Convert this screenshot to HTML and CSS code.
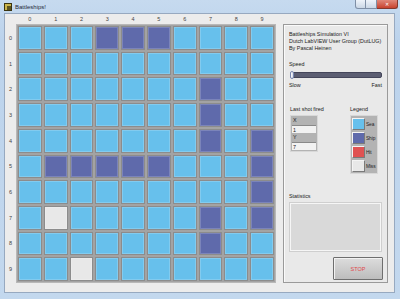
FILE: index.html
```html
<!DOCTYPE html>
<html lang="en">
<head>
    <meta charset="UTF-8">
    <title>Battleships!</title>
    <link rel="stylesheet" href="styles.css">
</head>
<body>

    <div class="window">
        <div class="titlebar">
            <span class="app-icon"></span>
            <span class="title">Battleships!</span>
            <div class="controls">
                <span class="ctl min"></span>
                <span class="ctl max"></span>
                <span class="ctl close">&#x2715;</span>
            </div>
        </div>

        <div class="content">
            <div class="board">
                <div class="corner"></div>
                <div class="col-labels" id="cols"></div>
                <div class="row-labels" id="rows"></div>
                <div class="grid" id="grid"></div>
            </div>

            <div class="panel">
                <div class="info">
                    Battleships Simulation VI<br>
                    Dutch LabVIEW User Group (DutLUG)<br>
                    By Pascal Heinen
                </div>

                <div class="label speed-label">Speed</div>
                <div class="slider"><span class="thumb"></span></div>
                <div class="slider-scale"><span>Slow</span><span>Fast</span></div>

                <div class="shots">
                    <div class="shot-block">
                        <div class="label">Last shot fired</div>
                        <div class="shot-box">
                            <div class="shot-head">X</div>
                            <div class="shot-val">1</div>
                            <div class="shot-head">Y</div>
                            <div class="shot-val">7</div>
                        </div>
                    </div>
                    <div class="legend-block">
                        <div class="label">Legend</div>
                        <div class="legend-box">
                            <div class="legend-row"><span class="swatch sea"></span>Sea</div>
                            <div class="legend-row"><span class="swatch ship"></span>Ship</div>
                            <div class="legend-row"><span class="swatch hit"></span>Hit</div>
                            <div class="legend-row"><span class="swatch miss"></span>Miss</div>
                        </div>
                    </div>
                </div>

                <div class="label stats-label">Statistics</div>
                <div class="stats"></div>

                <div class="stop-row">
                    <button class="stop">STOP</button>
                </div>
            </div>
        </div>
    </div>

    <script>
        // board state: s = sea, b = ship, m = miss
        const board = [
            "sssbbbssss",
            "ssssssssss",
            "sssssssbss",
            "sssssssbss",
            "sssssssbsb",
            "sbbbbbsssb",
            "sssssssssb",
            "smsssssbsb",
            "sssssssbss",
            "ssmsssssss"
        ];
        const names = { s: "sea", b: "ship", m: "miss", h: "hit" };

        const cols = document.getElementById("cols");
        const rows = document.getElementById("rows");
        const grid = document.getElementById("grid");

        for (let i = 0; i < 10; i++) {
            cols.innerHTML += `<span>${i}</span>`;
            rows.innerHTML += `<span>${i}</span>`;
        }

        board.forEach(line => {
            for (const ch of line) {
                grid.innerHTML += `<div class="cell ${names[ch]}"></div>`;
            }
        });
    </script>

</body>
</html>
```

FILE: styles.css
```css
* {
    box-sizing: border-box;
}
body {
    margin: 0;
    font-family: "Liberation Sans", Arial, sans-serif;
    color: #222;
}
.window {
    width: 400px;
    height: 299px;
    background: linear-gradient(#c6daef, #bcd3ec 40px, #c3d8ee);
    padding: 0 5px 6px 4px;
    display: flex;
    flex-direction: column;
}
.titlebar {
    height: 13px;
    display: flex;
    align-items: center;
    position: relative;
}
.app-icon {
    width: 8px;
    height: 8px;
    background: #5b5320;
    border: 1px solid #3a3410;
    box-shadow: inset 2px 2px 0 #c9b44a;
}
.title {
    font-size: 6px;
    margin-left: 3px;
    color: #1e2a3a;
}
.controls {
    position: absolute;
    top: 0;
    right: -3px;
    display: flex;
}
.ctl {
    height: 9px;
    width: 11px;
    border: 1px solid #7f8fa6;
    border-top: none;
    background: linear-gradient(#eef3fa, #cbd7e6);
}
.min {
    border-radius: 0 0 0 3px;
}
.max {
    border-left: none;
}
.close {
    width: 21px;
    border-left: none;
    border-color: #83392e;
    border-radius: 0 0 3px 0;
    background: linear-gradient(#e0887a, #c8432f);
    color: #fff;
    font-size: 5px;
    line-height: 8px;
    text-align: center;
}
.content {
    flex: 1;
    background: #ececec;
    border: 1px solid #97a9c0;
    display: flex;
    align-items: flex-start;
}

/* board */
.board {
    display: grid;
    grid-template-columns: 11px 260px;
    grid-template-rows: 10px 259px;
}
.col-labels {
    display: grid;
    grid-template-columns: repeat(10, 1fr);
    gap: 2px;
    padding: 0 2px;
    font-size: 5.5px;
    color: #444;
    align-items: center;
    text-align: center;
}
.row-labels {
    display: grid;
    grid-template-rows: repeat(10, 1fr);
    gap: 2px;
    padding: 2px 0;
    font-size: 5.5px;
    color: #444;
    align-items: center;
    text-align: center;
}
.grid {
    display: grid;
    grid-template-columns: repeat(10, 1fr);
    grid-template-rows: repeat(10, 1fr);
    gap: 2px;
    padding: 2px;
    background: #a3a3a3;
    box-shadow: inset 0 0 0 1px #b8b8b8;
}
.cell {
    border: 1px solid #8c8c8c;
    box-shadow: inset 0 0 0 1px rgba(255, 255, 255, 0.18);
}
.cell.sea, .swatch.sea {
    background: #67c0ec;
}
.cell.ship, .swatch.ship {
    background: #5f6aab;
}
.cell.miss, .swatch.miss {
    background: #e8e8e8;
}
.swatch.hit {
    background: #e05252;
}

/* right panel */
.panel {
    width: 105px;
    height: 259px;
    margin-left: 7px;
    margin-top: 10px;
    border: 1px solid #9a9a9a;
    box-shadow: inset 1px 1px 0 #fafafa;
    background: #e9e9e9;
    padding: 6px 4px 0 5px;
    font-size: 5.4px;
    line-height: 7px;
    white-space: nowrap;
}
.speed-label {
    margin-top: 9px;
}
.slider {
    position: relative;
    height: 8px;
    margin: 3px 1px 0 1px;
    display: flex;
    align-items: center;
}
.slider::before {
    content: "";
    flex: 1;
    height: 4px;
    border-radius: 2px;
    background: #5c5e72;
    border: 1px solid #44465a;
}
.thumb {
    position: absolute;
    left: 0;
    top: 0;
    width: 4px;
    height: 8px;
    border-radius: 2px;
    background: linear-gradient(90deg, #fff, #d4d8e6);
    border: 1px solid #7a88b0;
}
.slider-scale {
    display: flex;
    justify-content: space-between;
    margin-top: 3px;
    padding-right: 1px;
}
.shots {
    display: flex;
    justify-content: space-between;
    margin-top: 17px;
    padding-left: 1px;
    padding-right: 5px;
}
.shot-box, .legend-box {
    margin-top: 2px;
    width: 28px;
    background: #b3b3b3;
    border: 1px solid #d8d8d8;
}
.shot-box {
    padding: 0 1px 1px;
}
.shot-head {
    height: 9px;
    line-height: 9px;
    padding-left: 1px;
}
.shot-val {
    height: 8px;
    line-height: 8px;
    padding-left: 1px;
    background: #f2f2f2;
    border-top: 1px solid #8a8a8a;
}
.legend-box {
    height: 59px;
    padding: 1px 0 0 1px;
}
.legend-row {
    display: flex;
    align-items: center;
    height: 14px;
    font-size: 4.8px;
    letter-spacing: -0.1px;
}
.swatch {
    flex: none;
    width: 13px;
    height: 12px;
    margin-right: 1px;
    border: 1px solid #f4f4f4;
    border-right-color: #7a7a7a;
    border-bottom-color: #7a7a7a;
}
.stats-label {
    margin-top: 19px;
}
.stats {
    height: 48px;
    margin: 3px 2px 0 1px;
    background: #d9d9d9;
    border: 1px solid #f6f6f6;
    box-shadow: 0 0 0 1px #cfcfcf;
}
.stop-row {
    display: flex;
    justify-content: flex-end;
    margin-top: 6px;
}
.stop {
    width: 50px;
    height: 23px;
    border: 1px solid #6e6e6e;
    border-radius: 1px;
    background: linear-gradient(#dcdcdc, #bdbdbd);
    box-shadow: inset 1px 1px 0 #f2f2f2;
    color: #e0484a;
    font-family: "Liberation Sans", Arial, sans-serif;
    font-size: 5.5px;
    padding: 0;
}
```
